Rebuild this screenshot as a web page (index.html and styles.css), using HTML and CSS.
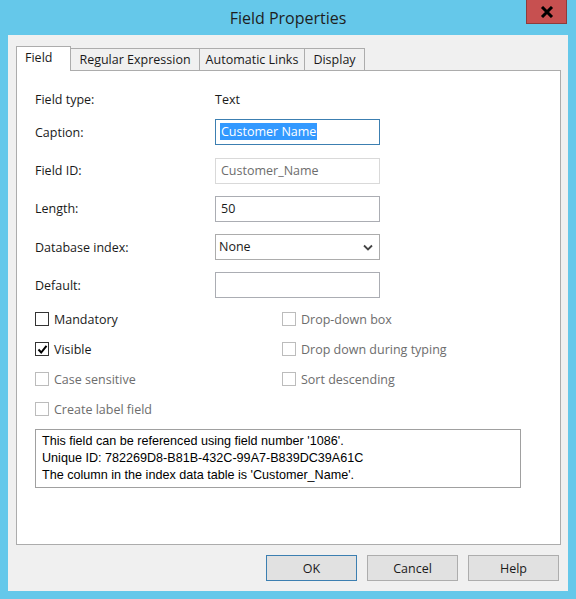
FILE: index.html
```html
<!DOCTYPE html>
<html lang="en">
<head>
    <meta charset="UTF-8">
    <title>Field Properties</title>
    <link rel="stylesheet" href="styles.css">
</head>
<body>
    <div class="window">
        <div class="titlebar">
            <div></div>
            <div class="title">Field Properties</div>
            <div class="close">
                <svg width="14" height="12" viewBox="0 0 14 12">
                    <path d="M2 1 L12 11 M12 1 L2 11" stroke="#000" stroke-width="3" fill="none"/>
                </svg>
            </div>
        </div>

        <div class="client">
            <div class="tabs">
                <div class="tab active">Field</div>
                <div class="tab">Regular Expression</div>
                <div class="tab">Automatic Links</div>
                <div class="tab">Display</div>
            </div>

            <div class="panel">
                <div class="form">
                    <div class="label first">Field type:</div>
                    <div class="value first">Text</div>

                    <div class="label">Caption:</div>
                    <div class="input focused"><span class="selected">Customer Name</span></div>

                    <div class="label">Field ID:</div>
                    <div class="input disabled">Customer_Name</div>

                    <div class="label">Length:</div>
                    <div class="input">50</div>

                    <div class="label">Database index:</div>
                    <div class="input select">
                        <span>None</span>
                        <svg width="10" height="7" viewBox="0 0 10 7">
                            <path d="M1 1.5 L5 5.5 L9 1.5" stroke="#444" stroke-width="1.8" fill="none"/>
                        </svg>
                    </div>

                    <div class="label">Default:</div>
                    <div class="input"></div>
                </div>

                <div class="checks">
                    <div class="check"><span class="box"></span>Mandatory</div>
                    <div class="check off"><span class="box"></span>Drop-down box</div>
                    <div class="check">
                        <span class="box">
                            <svg width="11" height="11" viewBox="0 0 11 11">
                                <path d="M1.5 5.5 L4.2 8.5 L9.5 1.8" stroke="#000" stroke-width="2" fill="none"/>
                            </svg>
                        </span>Visible
                    </div>
                    <div class="check off"><span class="box"></span>Drop down during typing</div>
                    <div class="check off"><span class="box"></span>Case sensitive</div>
                    <div class="check off"><span class="box"></span>Sort descending</div>
                    <div class="check off"><span class="box"></span>Create label field</div>
                </div>

                <div class="info">
                    This field can be referenced using field number '1086'.<br>
                    Unique ID: 782269D8-B81B-432C-99A7-B839DC39A61C<br>
                    The column in the index data table is 'Customer_Name'.
                </div>
            </div>

            <div class="buttons">
                <button class="default">OK</button>
                <button>Cancel</button>
                <button>Help</button>
            </div>
        </div>
    </div>
</body>
</html>
```

FILE: styles.css
```css
* {
    margin: 0;
    padding: 0;
    box-sizing: border-box;
}

body {
    width: 576px;
    height: 599px;
    background: #65c8ea;
    font-family: 'Open Sans', 'Liberation Sans', sans-serif;
    font-size: 12.5px;
    color: #1a1a1a;
    overflow: hidden;
}

.titlebar {
    height: 35px;
    display: grid;
    grid-template-columns: 1fr auto 1fr;
}

.title {
    font-size: 16px;
    line-height: 36px;
    color: #1e1e1e;
}

.close {
    justify-self: end;
    width: 41px;
    height: 24px;
    margin-right: 9px;
    background: #c75050;
    border: 1px solid #8e3b3b;
    border-top: none;
    display: flex;
    align-items: center;
    justify-content: center;
}

.client {
    margin: 0 8px;
    height: 556px;
    background: #f0f0f0;
    padding: 11px 7px 0 8px;
}

/* tabs */
.tabs {
    display: flex;
    align-items: flex-end;
    height: 24px;
}

.tab {
    height: 22px;
    line-height: 22px;
    padding: 0 8px;
    border: 1px solid #acacac;
    border-bottom: none;
    border-left: none;
    background: #f0f0f0;
}

.tab:nth-child(3) {
    padding: 0 6px;
}

.tab.active {
    position: relative;
    z-index: 1;
    height: 25px;
    line-height: 22px;
    margin-bottom: -1px;
    padding: 0 18px 0 8px;
    background: #fff;
    border-left: 1px solid #acacac;
}

.panel {
    height: 475px;
    background: #fff;
    border: 1px solid #acacac;
    padding: 21px 0 0 18px;
}

/* form rows */
.form {
    display: grid;
    grid-template-columns: 180px 165px;
    row-gap: 12.3px;
    align-items: center;
}

.first {
    height: 15px;
    line-height: 15px;
}

.input {
    height: 26px;
    border: 1px solid #abadb3;
    padding: 0 5px;
    line-height: 24px;
    background: #fff;
}

.input.focused {
    border-color: #3c7fb1;
}

.selected {
    background: #3399ff;
    color: #fff;
    padding: 0 1px;
    margin-left: -1px;
}

.input.disabled {
    border-color: #d9d9d9;
    color: #6d6d6d;
}

.input.select {
    border-color: #acacac;
    display: flex;
    align-items: center;
    justify-content: space-between;
    padding: 0 6px 0 3px;
}

/* checkboxes */
.checks {
    display: grid;
    grid-template-columns: 247px 1fr;
    row-gap: 14px;
    margin-top: 13px;
}

.check {
    display: flex;
    align-items: center;
    height: 16px;
}

.box {
    width: 14px;
    height: 14px;
    border: 1px solid #333;
    background: #fff;
    margin-right: 5px;
    display: flex;
    align-items: center;
    justify-content: center;
}

.check.off {
    color: #6d6d6d;
}

.check.off .box {
    border-color: #bcbcbc;
}

.info {
    width: 486px;
    height: 59px;
    margin-top: 12px;
    border: 1px solid #a0a0a0;
    padding: 3px 6px;
    font-family: 'Liberation Sans', sans-serif;
    font-size: 12.6px;
    line-height: 17px;
    color: #000;
}

/* dialog buttons */
.buttons {
    display: flex;
    justify-content: flex-end;
    gap: 10px;
    margin-top: 10px;
    padding-right: 2px;
}

button {
    width: 91px;
    height: 26px;
    background: #e1e1e1;
    border: 1px solid #adadad;
    font-family: 'Open Sans', sans-serif;
    font-size: 12.5px;
    color: #1a1a1a;
}

button.default {
    border-color: #3c7fb1;
}
```
